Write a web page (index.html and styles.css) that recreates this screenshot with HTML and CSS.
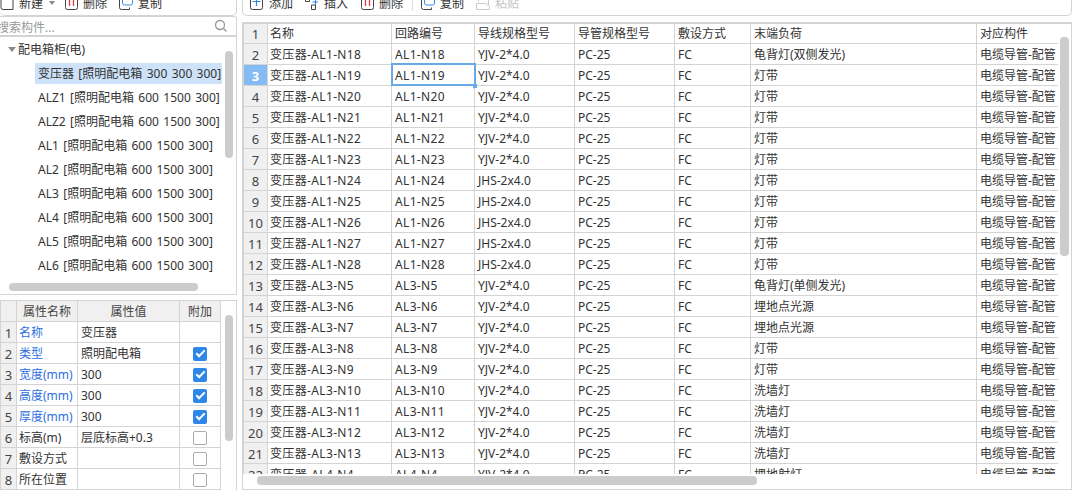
FILE: index.html
```html
<!DOCTYPE html>
<html lang="zh-CN">
<head>
	<meta charset="UTF-8">
	<title>配电箱柜</title>
	<link rel="stylesheet" href="styles.css">
</head>
<body>
	<div class="app">
		<!-- 左边 -->
		<div class="side">
			<div class="toolbar toolbar-left">
				<span class="tool tool-new"><svg width="14" height="14" viewBox="0 -2 14 14"><path d="M13 11.500H3a2 2 0 0 1-2-2V-2" fill="none" stroke="#444"/><path d="M13 11.500V-2" stroke="#444"/></svg>新建<i class="caret"></i></span>
				<span class="tool"><svg width="13" height="14" viewBox="0 -2 13 14"><path d="M.5-2v11.500a2 2 0 0 0 2 2h8a2 2 0 0 0 2-2V-2" fill="none" stroke="#444"/><path d="M4.500 1v7M8.500 1v7" stroke="#e23b3b" stroke-width="1.300"/></svg>删除</span>
				<span class="tool"><svg width="15" height="14" viewBox="0 -2 15 14"><path d="M1.500 2v7.500a2 2 0 0 0 2 2h8v-2" fill="none" stroke="#444"/><rect x="4.500" y="-5" width="10" height="12" rx="2" fill="#fff" stroke="#3a8ee6"/></svg>复制</span>
			</div>
			<div class="search">
				<span>搜索构件...</span>
				<svg width="14" height="14" viewBox="0 0 14 14"><circle cx="6" cy="6" r="4.500" fill="none" stroke="#999" stroke-width="1.300"/><path d="M9.500 9.500L12.500 12.500" stroke="#999" stroke-width="1.500"/></svg>
			</div>
			<div class="tree">
				<div class="tree-head"><i class="arrow"></i>配电箱柜(电)</div>
				<div class="tree-item selected">变压器 [照明配电箱 300 300 300]</div>
				<div class="tree-item">ALZ1 [照明配电箱 600 1500 300]</div>
				<div class="tree-item">ALZ2 [照明配电箱 600 1500 300]</div>
				<div class="tree-item">AL1 [照明配电箱 600 1500 300]</div>
				<div class="tree-item">AL2 [照明配电箱 600 1500 300]</div>
				<div class="tree-item">AL3 [照明配电箱 600 1500 300]</div>
				<div class="tree-item">AL4 [照明配电箱 600 1500 300]</div>
				<div class="tree-item">AL5 [照明配电箱 600 1500 300]</div>
				<div class="tree-item">AL6 [照明配电箱 600 1500 300]</div>
				<div class="thumb tree-v"></div>
				<div class="thumb tree-h"></div>
			</div>
			<div class="props">
				<table class="grid prop-grid">
					<colgroup><col class="p0"><col class="p1"><col class="p2"><col class="p3"></colgroup>
					<tr class="head"><th></th><th>属性名称</th><th>属性值</th><th>附加</th></tr>
					<tr><th>1</th><td class="blue">名称</td><td>变压器</td><td></td></tr>
					<tr><th>2</th><td class="blue">类型</td><td>照明配电箱</td><td><i class="check on"></i></td></tr>
					<tr><th>3</th><td class="blue">宽度(mm)</td><td>300</td><td><i class="check on"></i></td></tr>
					<tr><th>4</th><td class="blue">高度(mm)</td><td>300</td><td><i class="check on"></i></td></tr>
					<tr><th>5</th><td class="blue">厚度(mm)</td><td>300</td><td><i class="check on"></i></td></tr>
					<tr><th>6</th><td>标高(m)</td><td>层底标高+0.3</td><td><i class="check"></i></td></tr>
					<tr><th>7</th><td>敷设方式</td><td></td><td><i class="check"></i></td></tr>
					<tr><th>8</th><td>所在位置</td><td></td><td><i class="check"></i></td></tr>
				</table>
				<div class="thumb prop-v"></div>
			</div>
		</div>
		<!-- 右边 -->
		<div class="main">
			<div class="toolbar toolbar-main">
				<span class="tool"><svg width="15" height="14" viewBox="0 -2 15 14"><path d="M1.500-2v11.500a2 2 0 0 0 2 2h8a2 2 0 0 0 2-2V-2" fill="none" stroke="#444"/><path d="M7.500 0v8M3.500 3.500h8" stroke="#2e86e8" stroke-width="1.200"/></svg>添加</span>
				<span class="tool tool-wide"><svg width="15" height="14" viewBox="0 -2 15 14"><path d="M1.500 0v3.500h4V0zM7.500 7v4.500h4V7z" fill="none" stroke="#444"/><path d="M11.500 1v6M8.500 4h5.500" stroke="#2e86e8"/></svg>插入</span>
				<span class="tool"><svg width="13" height="14" viewBox="0 -2 13 14"><path d="M.5-2v11.500a2 2 0 0 0 2 2h8a2 2 0 0 0 2-2V-2" fill="none" stroke="#444"/><path d="M4.500 1v7M8.500 1v7" stroke="#e23b3b" stroke-width="1.300"/></svg>删除</span>
				<i class="tool-sep"></i>
				<span class="tool tool-copy"><svg width="15" height="14" viewBox="0 -2 15 14"><path d="M1.500 2v7.500a2 2 0 0 0 2 2h8v-2" fill="none" stroke="#444"/><rect x="4.500" y="-5" width="10" height="12" rx="2" fill="#fff" stroke="#3a8ee6"/></svg>复制</span>
				<span class="tool tool-off"><svg width="15" height="14" viewBox="0 -2 15 14"><path d="M2.500-2v6M12.500-2v10" fill="none" stroke="#ccc"/><path d="M.5 5.500h9l4 3v3h-13z" fill="#fff" stroke="#ccc"/></svg>粘贴</span>
			</div>
			<div class="sheet">
				<table class="grid main-grid">
					<colgroup><col class="m0"><col class="m1"><col class="m2"><col class="m3"><col class="m4"><col class="m5"><col class="m6"><col class="m7"></colgroup>
					<tr class="name-row"><th>1</th><td>名称</td><td>回路编号</td><td>导线规格型号</td><td>导管规格型号</td><td>敷设方式</td><td>末端负荷</td><td>对应构件</td></tr>
					<tr><th>2</th><td>变压器-AL1-N18</td><td>AL1-N18</td><td>YJV-2*4.0</td><td>PC-25</td><td>FC</td><td>龟背灯(双侧发光)</td><td>电缆导管-配管</td></tr>
					<tr class="current"><th>3</th><td>变压器-AL1-N19</td><td class="active">AL1-N19</td><td>YJV-2*4.0</td><td>PC-25</td><td>FC</td><td>灯带</td><td>电缆导管-配管</td></tr>
					<tr><th>4</th><td>变压器-AL1-N20</td><td>AL1-N20</td><td>YJV-2*4.0</td><td>PC-25</td><td>FC</td><td>灯带</td><td>电缆导管-配管</td></tr>
					<tr><th>5</th><td>变压器-AL1-N21</td><td>AL1-N21</td><td>YJV-2*4.0</td><td>PC-25</td><td>FC</td><td>灯带</td><td>电缆导管-配管</td></tr>
					<tr><th>6</th><td>变压器-AL1-N22</td><td>AL1-N22</td><td>YJV-2*4.0</td><td>PC-25</td><td>FC</td><td>灯带</td><td>电缆导管-配管</td></tr>
					<tr><th>7</th><td>变压器-AL1-N23</td><td>AL1-N23</td><td>YJV-2*4.0</td><td>PC-25</td><td>FC</td><td>灯带</td><td>电缆导管-配管</td></tr>
					<tr><th>8</th><td>变压器-AL1-N24</td><td>AL1-N24</td><td>JHS-2x4.0</td><td>PC-25</td><td>FC</td><td>灯带</td><td>电缆导管-配管</td></tr>
					<tr><th>9</th><td>变压器-AL1-N25</td><td>AL1-N25</td><td>JHS-2x4.0</td><td>PC-25</td><td>FC</td><td>灯带</td><td>电缆导管-配管</td></tr>
					<tr><th>10</th><td>变压器-AL1-N26</td><td>AL1-N26</td><td>JHS-2x4.0</td><td>PC-25</td><td>FC</td><td>灯带</td><td>电缆导管-配管</td></tr>
					<tr><th>11</th><td>变压器-AL1-N27</td><td>AL1-N27</td><td>JHS-2x4.0</td><td>PC-25</td><td>FC</td><td>灯带</td><td>电缆导管-配管</td></tr>
					<tr><th>12</th><td>变压器-AL1-N28</td><td>AL1-N28</td><td>JHS-2x4.0</td><td>PC-25</td><td>FC</td><td>灯带</td><td>电缆导管-配管</td></tr>
					<tr><th>13</th><td>变压器-AL3-N5</td><td>AL3-N5</td><td>YJV-2*4.0</td><td>PC-25</td><td>FC</td><td>龟背灯(单侧发光)</td><td>电缆导管-配管</td></tr>
					<tr><th>14</th><td>变压器-AL3-N6</td><td>AL3-N6</td><td>YJV-2*4.0</td><td>PC-25</td><td>FC</td><td>埋地点光源</td><td>电缆导管-配管</td></tr>
					<tr><th>15</th><td>变压器-AL3-N7</td><td>AL3-N7</td><td>YJV-2*4.0</td><td>PC-25</td><td>FC</td><td>埋地点光源</td><td>电缆导管-配管</td></tr>
					<tr><th>16</th><td>变压器-AL3-N8</td><td>AL3-N8</td><td>YJV-2*4.0</td><td>PC-25</td><td>FC</td><td>灯带</td><td>电缆导管-配管</td></tr>
					<tr><th>17</th><td>变压器-AL3-N9</td><td>AL3-N9</td><td>YJV-2*4.0</td><td>PC-25</td><td>FC</td><td>灯带</td><td>电缆导管-配管</td></tr>
					<tr><th>18</th><td>变压器-AL3-N10</td><td>AL3-N10</td><td>YJV-2*4.0</td><td>PC-25</td><td>FC</td><td>洗墙灯</td><td>电缆导管-配管</td></tr>
					<tr><th>19</th><td>变压器-AL3-N11</td><td>AL3-N11</td><td>YJV-2*4.0</td><td>PC-25</td><td>FC</td><td>洗墙灯</td><td>电缆导管-配管</td></tr>
					<tr><th>20</th><td>变压器-AL3-N12</td><td>AL3-N12</td><td>YJV-2*4.0</td><td>PC-25</td><td>FC</td><td>洗墙灯</td><td>电缆导管-配管</td></tr>
					<tr><th>21</th><td>变压器-AL3-N13</td><td>AL3-N13</td><td>YJV-2*4.0</td><td>PC-25</td><td>FC</td><td>洗墙灯</td><td>电缆导管-配管</td></tr>
					<tr><th>22</th><td>变压器-AL4-N4</td><td>AL4-N4</td><td>YJV-2*4.0</td><td>PC-25</td><td>FC</td><td>埋地射灯</td><td>电缆导管-配管</td></tr>
				</table>
				<div class="thumb main-v"></div>
				<div class="hbar"><div class="thumb main-h"></div></div>
			</div>
		</div>
	</div>
</body>
</html>
```
FILE: styles.css
```css
html, body {
	margin: 0;
	padding: 0;
	background: #fff;
}
body {
	width: 1076px;
	height: 490px;
	overflow: hidden;
	font-family: "Noto Sans", "Noto Sans CJK SC", sans-serif;
	font-size: 12px;
	color: #333;
}
.app {
	display: flex;
	gap: 5px;
	height: 490px;
	width: 1072px;
}
.side {
	width: 237px;
	display: flex;
	flex-direction: column;
	flex: none;
}
.main {
	flex: 1;
	display: flex;
	flex-direction: column;
	min-width: 0;
}
/* 工具栏上半部分被截掉了 */
.toolbar {
	height: 11px;
	padding-bottom: 4px;
	border: 1px solid #d4d4d4;
	border-top: none;
	border-radius: 0 0 5px 5px;
	display: flex;
	align-items: flex-end;
	box-sizing: content-box;
	position: relative;
	overflow: hidden;
}
.toolbar-left {
	border-left: none;
}
.toolbar-main {
	padding-left: 6px;
}
.tool {
	display: flex;
	flex: none;
	align-items: flex-end;
	gap: 5px;
	margin-right: 11px;
	height: 14px;
	line-height: 14px;
	white-space: nowrap;
}
.tool svg {
	flex: none;
	margin-bottom: 1px;
}
.tool-new {
	margin-right: 0;
	width: 65px;
}
.tool-wide {
	margin-right: 13px;
}
.tool-copy {
	margin-right: 12px;
}
.caret {
	width: 0;
	height: 0;
	border: 3px solid transparent;
	border-top: 4px solid #888;
	margin: 0 0 3px 1px;
}
.tool-off {
	color: #c4c4c4;
	gap: 4px;
}
.tool-sep {
	flex: none;
	width: 1px;
	height: 13px;
	background: #ddd;
	margin: 0 7px 0 -2px;
}
.search {
	height: 18px;
	border: 1px solid #d4d4d4;
	border-left: none;
	border-bottom: 2px solid #d4d4d4;
	border-radius: 0 3px 0 0;
	display: flex;
	justify-content: space-between;
	align-items: center;
	padding-right: 8px;
	color: #999;
	overflow: hidden;
}
.search span {
	margin-left: -3px;
	padding-top: 2px;
}
.tree {
	position: relative;
	height: 258px;
	box-sizing: border-box;
	border-right: 1px solid #d4d4d4;
	border-bottom: 1px solid #d4d4d4;
	padding-top: 1px;
	overflow: hidden;
}
.tree-head {
	height: 24px;
	line-height: 24px;
	padding-left: 18px;
	position: relative;
}
.arrow {
	position: absolute;
	left: 8px;
	top: 9px;
	width: 0;
	height: 0;
	border: 4px solid transparent;
	border-top: 5px solid #888;
}
.tree-item {
	height: 24px;
	line-height: 24px;
	padding-left: 38px;
	white-space: pre;
	word-spacing: 1.250px;
}
.tree-item.selected {
	background: linear-gradient(#cde2f8, #cde2f8) 35px 1px / 187px 21px no-repeat;
}
.thumb {
	position: absolute;
	background: #ccc;
	border-radius: 4px;
}
.tree-v {
	left: 225px;
	top: 14px;
	width: 8px;
	height: 107px;
}
.tree-h {
	left: 9px;
	top: 246px;
	width: 189px;
	height: 8px;
}
.props {
	position: relative;
	margin-top: 5px;
	flex: 1;
	border-top: 1px solid #d4d4d4;
	border-right: 1px solid #d4d4d4;
	overflow: hidden;
}
.prop-v {
	left: 225px;
	top: 14px;
	width: 8px;
	height: 126px;
}
.grid {
	border-collapse: collapse;
	table-layout: fixed;
}
.grid th, .grid td {
	height: 18px;
	padding: 2px 0 0;
	border: 1px solid #d4d4d4;
	white-space: nowrap;
	overflow: hidden;
	line-height: 16px;
	vertical-align: middle;
}
.grid th {
	background: #f0f0f0;
	font-weight: normal;
	font-size: 13px;
	text-align: center;
	color: #444;
}
.grid td {
	padding-left: 3px;
}
.prop-grid {
	width: 221px;
}
.prop-grid .head th {
	font-size: 12px;
	border-top: none;
}
.prop-grid td:nth-child(2) {
	padding-left: 2px;
}
.prop-grid td:last-child {
	padding: 0;
	height: 20px;
	text-align: center;
}
.p0 { width: 16px; }
.p1 { width: 61px; }
.p2 { width: 102px; }
.p3 { width: 41px; }
.blue {
	color: #2d6fe0;
}
.check {
	display: block;
	box-sizing: border-box;
	width: 14px;
	height: 14px;
	margin: 1px auto 0;
	border: 1px solid #aaa;
	border-radius: 2px;
	background: #fff;
}
.check.on {
	border: none;
	background: #2e86e8;
	position: relative;
}
.check.on::after {
	content: "";
	position: absolute;
	left: 3px;
	top: 3px;
	width: 7px;
	height: 3px;
	border-left: 2px solid #fff;
	border-bottom: 2px solid #fff;
	transform: rotate(-45deg);
}
.sheet {
	position: relative;
	margin-top: 6px;
	height: 468px;
	border: 1px solid #d4d4d4;
	border-top: 2px solid #d4d4d4;
	overflow: hidden;
}
.main-grid {
	width: 814px;
	margin-top: -1px;
}
.m0 { width: 24px; }
.m1 { width: 124px; }
.m2 { width: 83px; }
.m3 { width: 100px; }
.m4 { width: 100px; }
.m5 { width: 76px; }
.m6 { width: 226px; }
.m7 { width: 81px; }
.main-grid .name-row th, .main-grid .name-row td {
	height: 17px;
}
.main-grid td:nth-child(2), .main-grid td:nth-child(3) {
	letter-spacing: 0.350px;
}
.main-grid .name-row td {
	letter-spacing: 0;
}
.main-grid td:nth-child(2) {
	padding-left: 2px;
}
.main-grid td:last-child {
	border-right: none;
}
.current th {
	background: #84bbf5;
	color: #fff;
	font-weight: bold;
}
.grid td.active {
	position: relative;
	overflow: visible;
	outline: 2px solid #6aa9e8;
	outline-offset: -1px;
	z-index: 1;
}
.active::after {
	content: "";
	position: absolute;
	right: -3px;
	bottom: -3px;
	width: 4px;
	height: 4px;
	background: #6aa9e8;
}
.hbar {
	position: absolute;
	left: 0;
	right: 0;
	top: 450px;
	bottom: 0;
	background: #fff;
	z-index: 2;
}
.main-v {
	left: 817px;
	top: 13px;
	width: 9px;
	height: 219px;
}
.main-h {
	left: 14px;
	top: 2px;
	width: 500px;
	height: 9px;
}
```
